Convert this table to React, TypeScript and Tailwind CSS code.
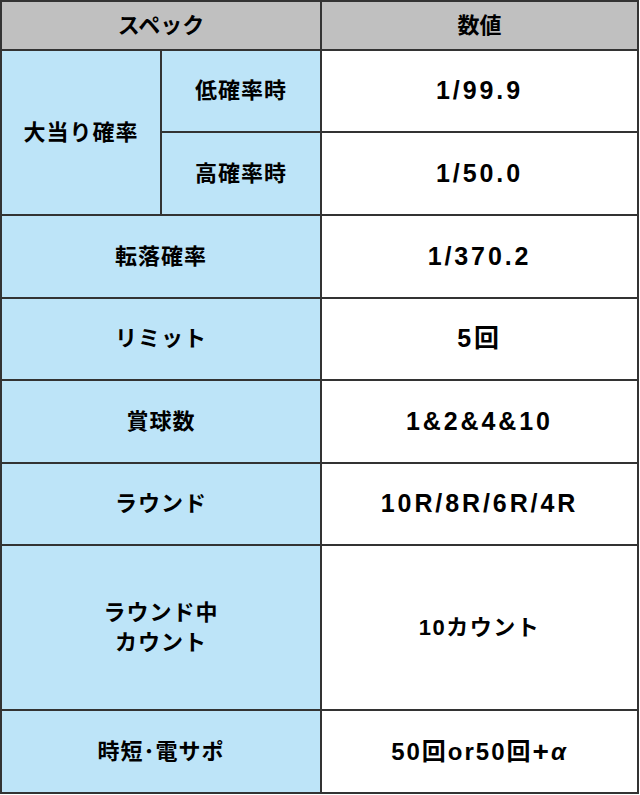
const jp = "font-['Liberation_Sans','Noto_Sans_CJK_JP',sans-serif] font-bold text-black"

function Cell({ children, className = '' }: { children: React.ReactNode; className?: string }) {
  return (
    <div className={`flex items-center justify-center text-center ${className}`}>
      {children}
    </div>
  )
}

const rows: [string, string][] = [
  ['転落確率', '1/370.2'],
  ['リミット', '5回'],
  ['賞球数', '1&2&4&10'],
  ['ラウンド', '10R/8R/6R/4R'],
]

export default function App() {
  const label = 'bg-[#bde4f8] text-[22px] leading-[30px] tracking-[1px]'
  const value = 'bg-white text-[25px] tracking-[2.9px]'
  return (
    <div className={`w-[639px] bg-white ${jp}`}>
      <div className="grid grid-cols-[158px_158px_315px] grid-rows-[47px_80px_81px_81px_80px_81px_80px_163px_81px] gap-[2px] p-[2px] bg-[#333]">
        <Cell className="col-span-2 bg-[#c0c0c0] text-[22px]">スペック</Cell>
        <Cell className="bg-[#c0c0c0] text-[22px]">数値</Cell>

        <Cell className={`row-span-2 ${label}`}>大当り確率</Cell>
        <Cell className={label}>低確率時</Cell>
        <Cell className={value}>1/99.9</Cell>
        <Cell className={label}>高確率時</Cell>
        <Cell className={value}>1/50.0</Cell>

        {rows.map(([k, v]) => (
          <div key={k} className="contents">
            <Cell className={`col-span-2 ${label}`}>{k}</Cell>
            <Cell className={value}>{v}</Cell>
          </div>
        ))}

        <Cell className={`col-span-2 ${label}`}>
          ラウンド中<br />カウント
        </Cell>
        <Cell className="bg-white text-[22px] tracking-[1.5px]">10カウント</Cell>

        <Cell className={`col-span-2 ${label}`}>時短･電サポ</Cell>
        <Cell className="bg-white text-[24px] tracking-[2px]">
          50回or50回<span className="text-[28px] leading-none">+</span><i>α</i>
        </Cell>
      </div>
    </div>
  )
}
